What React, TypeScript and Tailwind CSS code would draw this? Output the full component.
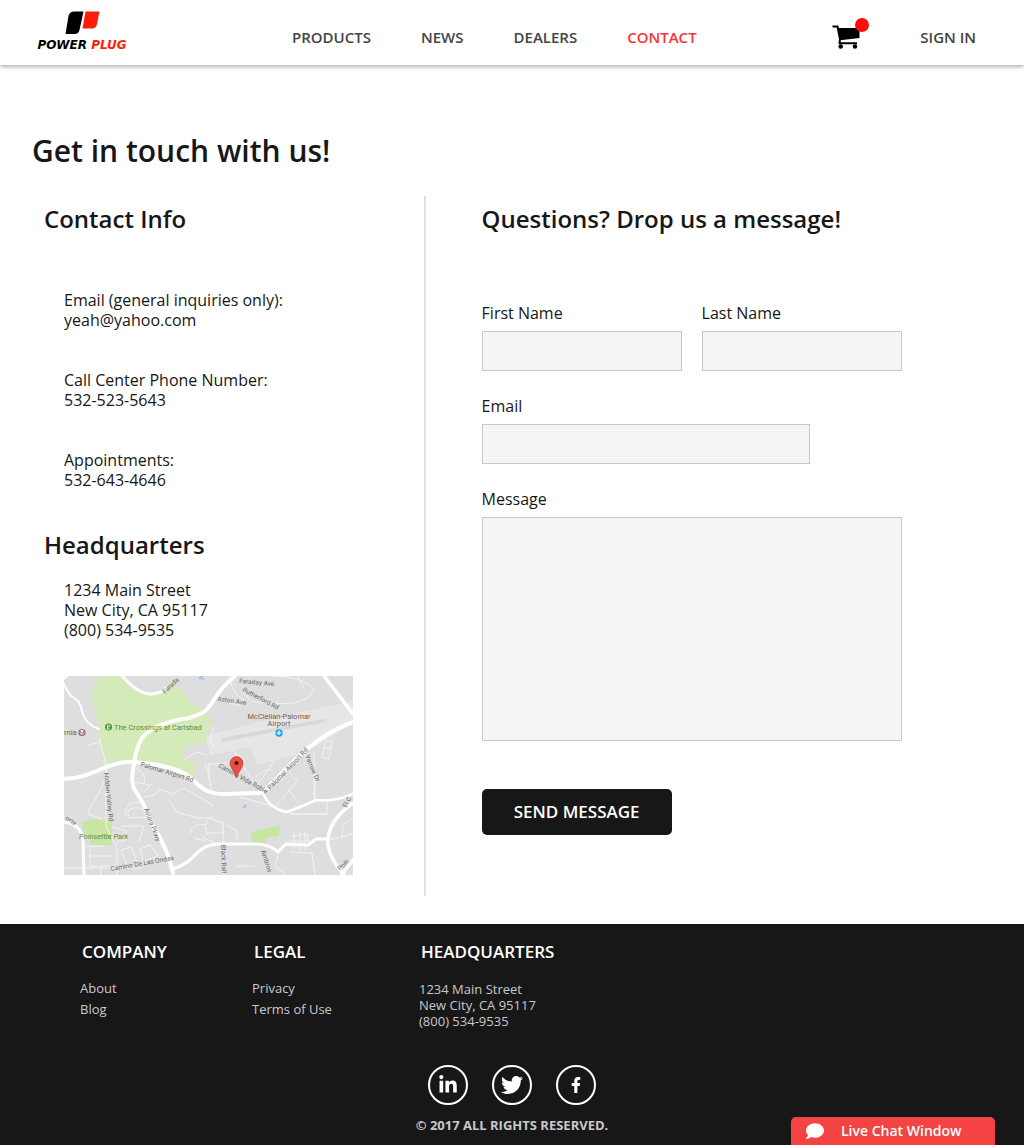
import React from "react";
import { FaComment, FaFacebookF, FaLinkedinIn, FaTwitter } from "react-icons/fa";

const navItems = [
  { label: "PRODUCTS", active: false },
  { label: "NEWS", active: false },
  { label: "DEALERS", active: false },
  { label: "CONTACT", active: true },
];

function Logo() {
  return (
    <a href="#home" aria-label="Power Plug home" className="mb-1 block w-[102px] shrink-0">
      <svg viewBox="0 0 102 40" className="block w-full">
        <path d="M42 0.500H51.500L47.500 19Q46.500 23 43 23H33.500L36.500 5Q37.500 0.500 42 0.500Z" fill="#000" />
        <path d="M53.500 0.500H67.500L65 13Q64 17.500 60 17.500H50.500Z" fill="#fe1d07" />
        <text x="50" y="38" textAnchor="middle" fontSize="12" fontWeight="700" fontStyle="italic" fontFamily="'DejaVu Sans', sans-serif" fill="#000">
          POWER <tspan fill="#fe1d07">PLUG</tspan>
        </text>
      </svg>
    </a>
  );
}

function CartButton() {
  return (
    <button type="button" aria-label="Cart" className="relative ml-auto shrink-0">
      <svg viewBox="0 0 28 24" className="block w-7">
        <path d="M0.500 1.500H5.500L8 14L7.500 18.300H25" fill="none" stroke="#000" strokeWidth="2" strokeLinejoin="round" />
        <path d="M5.500 3H27.500V13L8 15.200Z" fill="#000" />
        <circle cx="8.700" cy="21.500" r="2.300" />
        <circle cx="23" cy="21.500" r="2.300" />
      </svg>
      <span className="absolute -top-[7px] -right-[9px] size-3.5 rounded-full bg-[#ff0d0d]" />
    </button>
  );
}

function RoadMap() {
  return (
    <svg viewBox="0 0 289 199" role="img" aria-label="Map of headquarters" className="block w-full" fontFamily="Roboto, sans-serif">
      <rect width="289" height="199" fill="#dedede" />
      <path d="M142 60L218 40L289 25V47L242 76L193 89L187 71L146 79Z" fill="#e6e6e6" />
      <path d="M158 62L260 43L262 46L158 66Z" fill="#d8d8d8" />
      <path d="M38 0H60Q75 20 88 19Q98 18 108 8L122 18L126 28L138 32L150 47L142 56L143 65L120 71L119 82L134 89L128 102Q105 87 70 84Q58 83 43 88L35 62V45Q26 28 29 12Q32 2 38 0Z" fill="#d5eab9" />
      <path d="M0 0H5L0 4Z" fill="#fff" />
      <path d="M18 147L25 143L48 145V169H26V162L19 155Z" fill="#c9e5a3" />
      <path d="M187 156L195 154L216 149L215 160L202 162L202 168H188Z" fill="#c9e5a3" />
      <g fill="none" stroke="#f3f3f3" strokeWidth="1">
        <path d="M35 62L42 88V150L53 172V199M42 89L43 100L30 126Q22 135 26 139L38 143M36 66L23 70" />
        <path d="M72 93Q83 96 80 107M70 106L87 109L80 116M80 121Q92 120 96 113L108 118L120 112L150 130M104 123L113 136L133 142H150" />
        <path d="M48 151L62 155V164L53 166M57 150H80L75 165M61 139Q62 127 72 126L80 128M65 142Q60 130 76 132L84 141L66 142M57 174L68 171L73 188M57 174L64 192L95 179M76 173L86 169L94 179M80 188L76 173M20 170H40M26 171V190H52M26 180H50M0 192H78M37 190V199" />
        <path d="M126 158Q130 145 142 149M141 149Q145 158 139 162L150 166M130 162L142 165M141 88L145 100L148 117M143 79L132 76L120 84M150 50L146 63L150 72" />
        <path d="M145 103V88L164 87Q176 72 181 87M148 109H145M170 75L192 111M192 111L211 84M192 101Q202 92 208 94M212 130L233 105L222 92M224 113L232 123M250 77V123M263 124V138H225M258 81L261 66L268 64L265 83L258 81M260 72H267M240 78L246 88L251 95V122M280 122L289 127" />
        <path d="M180 10Q180 24 192 26L226 28Q249 23 250 13Q238 0 208 0M165 0Q168 18 180 24M233 0L240 12M152 23L177 30M141 149L145 142L158 147L160 157H142M159 145V199M163 149L173 155V164M173 190H191M214 179L211 190L222 199M227 160L244 158V166M230 155V174M236 155V174M241 155V174M226 165H246M226 176L248 177L251 199M264 164L289 158M278 163L279 149L289 142M175 121L202 128L228 138H263" />
      </g>
      <g fill="none" stroke="#fff" strokeLinecap="round" strokeLinejoin="round">
        <path d="M0 8Q4 18 10 22Q17 26 18 36Q22 49 35 53" strokeWidth="2" />
        <path d="M58 0Q75 19 88 18Q98 17 102 12" strokeWidth="3" />
        <path d="M0 103C27 103 45 84 70 86C102 89 120 94 130 105C140 115 148 118 160 118L195 117C207 112 220 92 242 74Q264 55 289 46" strokeWidth="4" />
        <path d="M171 0Q160 9 153 19C143 35 142 37 125 42Q90 47 78 62Q72 72 70 88Q66 107 71 114L79 127L90 152Q103 171 109 197" strokeWidth="4" />
        <path d="M109 193Q124 188 132 178Q141 169 152 168H194Q207 169 214 176L222 168L244 169L252 163H264" strokeWidth="3" />
        <path d="M289 127Q262 146 264 169Q266 183 280 199M260 0L289 38M278 198L289 184" strokeWidth="3.500" />
        <path d="M199 117Q205 132 222 136Q235 132 252 124Q271 126 289 118" strokeWidth="2.500" />
        <path d="M0 146Q17 148 19 164L20 199" strokeWidth="3" />
      </g>
      <g fontSize="6.500" fill="#666">
        <text transform="translate(101 18) rotate(-44)">Farada</text>
        <text transform="translate(175 7) rotate(5)">Faraday Ave</text>
        <text transform="translate(153 25) rotate(8)">Aston Ave</text>
        <text transform="translate(178 15) rotate(28)">Rutherford Rd</text>
        <text transform="translate(76 90) rotate(17)">Palomar Airport Rd</text>
        <text transform="translate(206 114) rotate(-46)">Palomar Airport Rd</text>
        <text transform="translate(154 91) rotate(29)">Camino Vida Roble</text>
        <text transform="translate(40 97) rotate(84)">Hidden Valley Rd</text>
        <text transform="translate(80 133) rotate(69)">Aviara Pkwy</text>
        <text transform="translate(241 80) rotate(67)">Yarrow Dr</text>
        <text transform="translate(47 195) rotate(-10)">Camino De Las Ondas</text>
        <text transform="translate(157 169) rotate(88)">Black Rail</text>
        <text transform="translate(197 175) rotate(72)">Ambros</text>
        <text transform="translate(282 132) rotate(-60)">El C</text>
        <text transform="translate(276 195) rotate(-45)">Poin</text>
        <text transform="translate(1 143) rotate(35)">orte</text>
      </g>
      <g fontSize="7.500" fill="#559136">
        <text x="50" y="54">The Crossings at Carlsbad</text>
        <text x="15" y="163" fontStyle="italic">Poinsettia Park</text>
      </g>
      <g fontSize="7.500" fill="#7b5b51">
        <text x="0" y="59">rnia</text>
        <text x="215" y="43" textAnchor="middle">McClellan-Palomar</text>
        <text x="215" y="50" textAnchor="middle">Airport</text>
      </g>
      <circle cx="44.500" cy="51" r="3.500" fill="#559136" />
      <path d="M43.500 53V49L46 50L44 51.500M42.500 53H46" fill="none" stroke="#e8f4dc" strokeWidth="0.800" />
      <circle cx="18" cy="56.500" r="3" fill="#fff" stroke="#8b6a60" strokeWidth="1.200" />
      <path d="M16.500 55V57H19.500V55M18 57V59" fill="none" stroke="#8b6a60" strokeWidth="0.800" />
      <circle cx="215" cy="57" r="3.700" fill="#12a9ee" />
      <path d="M215 54.500V59M212.500 57H217.500" stroke="#fff" strokeWidth="1.200" />
      <path d="M134 3L136 0H139V2L142 4Z" fill="#9fc5f5" />
      <path d="M178 132L181 128L183 130L181 132Z" fill="#9fc5f5" />
      <path d="M172.500 102Q171 97 168 93Q166 90 166 87A6.500 6.500 0 0 1 179 87Q179 90 177 93Q174 97 172.500 102Z" fill="#ea4d42" stroke="#b53a32" strokeWidth="0.600" />
      <circle cx="172.500" cy="87" r="2" fill="#3a0d0a" />
    </svg>
  );
}

type FieldProps = { id: string; label: string; className?: string; multiline?: boolean };

function Field({ id, label, className = "", multiline = false }: FieldProps) {
  return (
    <div className={`flex flex-col gap-2 ${className}`}>
      <label htmlFor={id} className="text-base leading-5 font-medium">
        {label}
      </label>
      {multiline ? (
        <textarea id={id} className="h-56 w-full resize-none border border-[#c8c8c8] bg-[#f5f5f5] p-3" />
      ) : (
        <input id={id} type="text" className="h-10 w-full border border-[#c8c8c8] bg-[#f5f5f5] px-3" />
      )}
    </div>
  );
}

const socials = [
  { name: "LinkedIn", icon: <FaLinkedinIn className="size-5" /> },
  { name: "Twitter", icon: <FaTwitter className="size-[22px]" /> },
  { name: "Facebook", icon: <FaFacebookF className="size-4" /> },
];

export default function App() {
  return (
    <div className="bg-white font-['Open_Sans',sans-serif] text-[#171717]">
      <header className="relative flex h-[65px] items-center bg-white pr-12 pl-8 text-[15px] leading-5 font-semibold text-[#444] shadow-[0_2px_4px_rgba(0,0,0,0.3)]">
        <Logo />
        <nav className="ml-[158px] flex gap-[50px] pt-2">
          {navItems.map((item) => (
            <a key={item.label} href="#nav" className={item.active ? "text-[#f53434]" : ""}>
              {item.label}
            </a>
          ))}
        </nav>
        <div className="ml-auto flex items-center pt-2">
          <CartButton />
          <a href="#sign-in" className="ml-[60px]">
            SIGN IN
          </a>
        </div>
      </header>

      <main className="px-8 pt-[66px] pb-7">
        <h1 className="mb-[25px] text-[30px] leading-10 font-semibold">Get in touch with us!</h1>
        <div className="grid grid-cols-[41fr_59fr]">
          <section className="border-r-2 border-[#e0e0e0] pt-[7px] pb-[21px] pl-3">
            <h2 className="text-2xl leading-8 font-semibold">Contact Info</h2>
            <div className="mt-[55px] flex flex-col gap-10 pl-5 text-base leading-5 font-medium">
              <p>
                Email (general inquiries only):
                <br />
                yeah@yahoo.com
              </p>
              <p>
                Call Center Phone Number:
                <br />
                532-523-5643
              </p>
              <p>
                Appointments:
                <br />
                532-643-4646
              </p>
            </div>
            <h2 className="mt-[39px] text-2xl leading-8 font-semibold">Headquarters</h2>
            <div className="mt-[19px] pl-5">
              <address className="text-base leading-5 font-medium not-italic">
                1234 Main Street
                <br />
                New City, CA 95117
                <br />
                (800) 534-9535
              </address>
              <div className="mt-9 max-w-[289px]">
                <RoadMap />
              </div>
            </div>
          </section>

          <section className="pt-[7px] pl-14">
            <h2 className="text-2xl leading-8 font-semibold">Questions? Drop us a message!</h2>
            <form className="mt-[68px] flex max-w-[420px] flex-col gap-[25px]">
              <div className="grid grid-cols-2 gap-5">
                <Field id="first-name" label="First Name" />
                <Field id="last-name" label="Last Name" />
              </div>
              <Field id="email" label="Email" className="max-w-[328px]" />
              <Field id="message" label="Message" multiline />
              <button type="button" className="mt-[23px] h-[46px] w-[190px] rounded-[5px] bg-[#171717] text-[17px] font-semibold text-white">
                SEND MESSAGE
              </button>
            </form>
          </section>
        </div>
      </main>

      <footer className="bg-[#171717] px-20 pt-4 pb-2.5 text-[13px] text-[#c9c9c9]">
        <div className="grid grid-cols-[172px_167px_1fr]">
          <div>
            <h3 className="pl-0.5 text-[17px] leading-6 font-semibold text-white">COMPANY</h3>
            <ul className="mt-3.5 leading-[21px]">
              <li><a href="#about">About</a></li>
              <li><a href="#blog">Blog</a></li>
            </ul>
          </div>
          <div>
            <h3 className="pl-0.5 text-[17px] leading-6 font-semibold text-white">LEGAL</h3>
            <ul className="mt-3.5 leading-[21px]">
              <li><a href="#privacy">Privacy</a></li>
              <li><a href="#terms">Terms of Use</a></li>
            </ul>
          </div>
          <div>
            <h3 className="pl-0.5 text-[17px] leading-6 font-semibold text-white">HEADQUARTERS</h3>
            <address className="mt-[17px] leading-4 not-italic">
              1234 Main Street
              <br />
              New City, CA 95117
              <br />
              (800) 534-9535
            </address>
          </div>
        </div>
        <div className="mt-9 flex justify-center gap-6">
          {socials.map((s) => (
            <a key={s.name} href="#social" aria-label={s.name} className="flex size-10 items-center justify-center rounded-full border-2 border-white text-white">
              {s.icon}
            </a>
          ))}
        </div>
        <p className="mt-2.5 text-center leading-5 font-bold">© 2017 ALL RIGHTS RESERVED.</p>
      </footer>

      <button type="button" className="fixed right-[29px] bottom-0 flex h-7 w-[204px] items-center gap-[17px] rounded-t-[5px] bg-[#f54242] pl-[15px] text-sm font-semibold text-white">
        <FaComment className="size-[18px]" />
        Live Chat Window
      </button>
    </div>
  );
}
